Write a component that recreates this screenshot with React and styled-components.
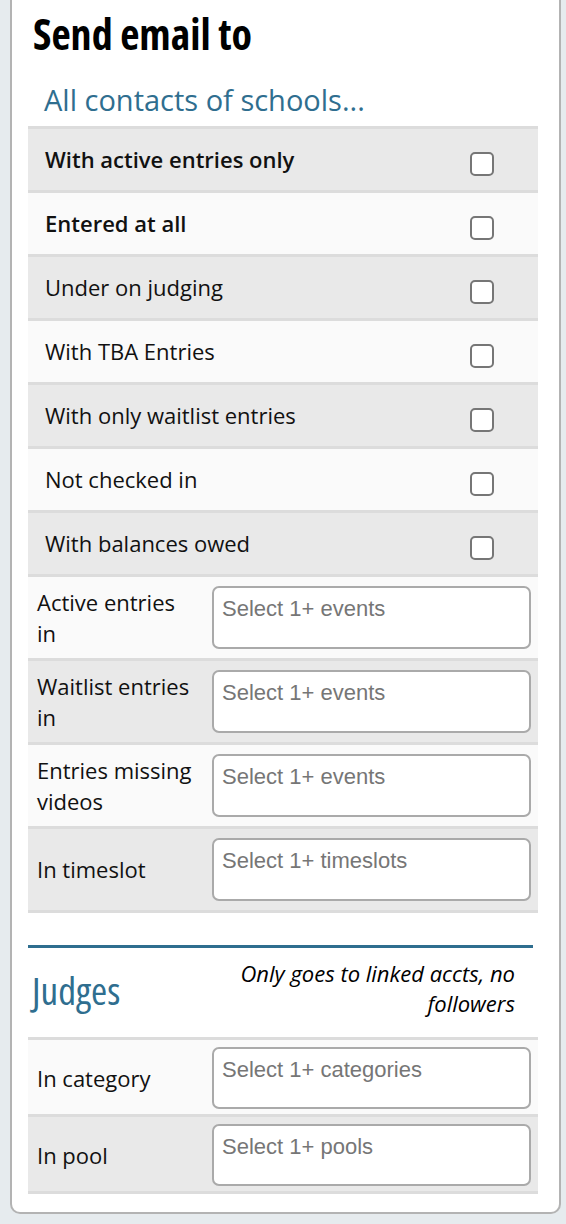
import React from "react";
import styled, { createGlobalStyle } from "styled-components";

const Global = createGlobalStyle`
  html, body { margin: 0; padding: 0; background: #e6ebee; }
  body { font-family: "Open Sans", "Noto Sans", sans-serif; color: #111; }
  * { box-sizing: border-box; }
`;

const Page = styled.div`
  padding: 0 5px 10px 10px;
  min-height: 1224px;
`;

const Panel = styled.div`
  background: #fff;
  border: 2px solid #b3b3b3;
  border-top: none;
  border-radius: 0 0 10px 10px;
  padding: 9px 21px 18px 16px;
`;

const Title = styled.h2`
  margin: 0 0 0 5px;
  font-family: "Open Sans", sans-serif;
  font-stretch: 75%;
  font-weight: 700;
  font-size: 42px;
  line-height: 50px;
  color: #000;
`;

const Subtitle = styled.h4`
  margin: 23px 0 8px 16px;
  font-family: "Open Sans", sans-serif;
  font-weight: 400;
  font-size: 29px;
  line-height: 36px;
  color: #2f6e8f;
`;

const Table = styled.div`
  display: flex;
  flex-direction: column;
  border-top: 3px solid #dcdcdc;
`;

const Row = styled.div`
  display: flex;
  align-items: center;
  background: ${(p) => (p.$alt ? "#fafafa" : "#e9e9e9")};
  border-bottom: 3px solid #dcdcdc;
  min-height: ${(p) => p.$h}px;
  padding: ${(p) => p.$pad};
`;

const CheckLabel = styled.span`
  flex: 1;
  font-size: 22px;
  line-height: 33px;
  font-weight: ${(p) => (p.$bold ? 600 : 400)};
  color: #111;
`;

const Box = styled.span`
  width: 24px;
  height: 24px;
  border: 2px solid #767676;
  border-radius: 5px;
  background: #fff;
  margin: 8px 44px 0 0;
`;

const FieldLabel = styled.span`
  width: 175px;
  flex: none;
  font-size: 22px;
  line-height: 31px;
  color: #111;
  padding-right: 16px;
`;

const Select = styled.div`
  flex: 1;
  height: ${(p) => p.$h}px;
  border: 2px solid #aaaaaa;
  border-radius: 7px;
  background: #fff;
  padding: 9px 8px;
  font-family: "Liberation Sans", Arial, sans-serif;
  font-size: 22px;
  line-height: 24px;
  color: #767676;
  margin-right: 7px;
`;

const Divider = styled.div`
  height: 3px;
  background: #2f6e8f;
  margin: 32px 5px 0 0;
`;

const JudgeHead = styled.div`
  display: flex;
  align-items: center;
  justify-content: space-between;
  padding: 10px 23px 19px 4px;
`;

const JudgeTitle = styled.h4`
  margin: 4px 0 0;
  font-family: "Open Sans", sans-serif;
  font-stretch: 75%;
  font-weight: 400;
  font-size: 39px;
  line-height: 48px;
  color: #2f6e8f;
`;

const Note = styled.span`
  width: 300px;
  text-align: right;
  font-style: italic;
  font-size: 22px;
  line-height: 30px;
  color: #000;
`;

const checks = [
  ["With active entries only", true],
  ["Entered at all", true],
  ["Under on judging", false],
  ["With TBA Entries", false],
  ["With only waitlist entries", false],
  ["Not checked in", false],
  ["With balances owed", false],
];

const selects = [
  ["Active entries in", "Select 1+ events"],
  ["Waitlist entries in", "Select 1+ events"],
  ["Entries missing videos", "Select 1+ events"],
  ["In timeslot", "Select 1+ timeslots"],
];

const judges = [
  ["In category", "Select 1+ categories"],
  ["In pool", "Select 1+ pools"],
];

export default function App() {
  return (
    <>
      <Global />
      <Page>
        <Panel>
          <Title>Send email to</Title>
          <Subtitle>All contacts of schools...</Subtitle>
          <Table>
            {checks.map(([label, bold], i) => (
              <Row key={label} $alt={i % 2 === 1} $h={64} $pad="0 0 0 17px">
                <CheckLabel $bold={bold}>{label}</CheckLabel>
                <Box />
              </Row>
            ))}
            {selects.map(([label, ph], i) => (
              <Row key={label} $alt={i % 2 === 0} $h={84} $pad="9px 0 9px 9px">
                <FieldLabel>{label}</FieldLabel>
                <Select $h={63}>{ph}</Select>
              </Row>
            ))}
          </Table>
          <Divider />
          <JudgeHead>
            <JudgeTitle>Judges</JudgeTitle>
            <Note>Only goes to linked accts, no followers</Note>
          </JudgeHead>
          <Table>
            {judges.map(([label, ph], i) => (
              <Row key={label} $alt={i % 2 === 0} $h={77} $pad="7px 0 5px 9px">
                <FieldLabel>{label}</FieldLabel>
                <Select $h={62}>{ph}</Select>
              </Row>
            ))}
          </Table>
        </Panel>
      </Page>
    </>
  );
}
